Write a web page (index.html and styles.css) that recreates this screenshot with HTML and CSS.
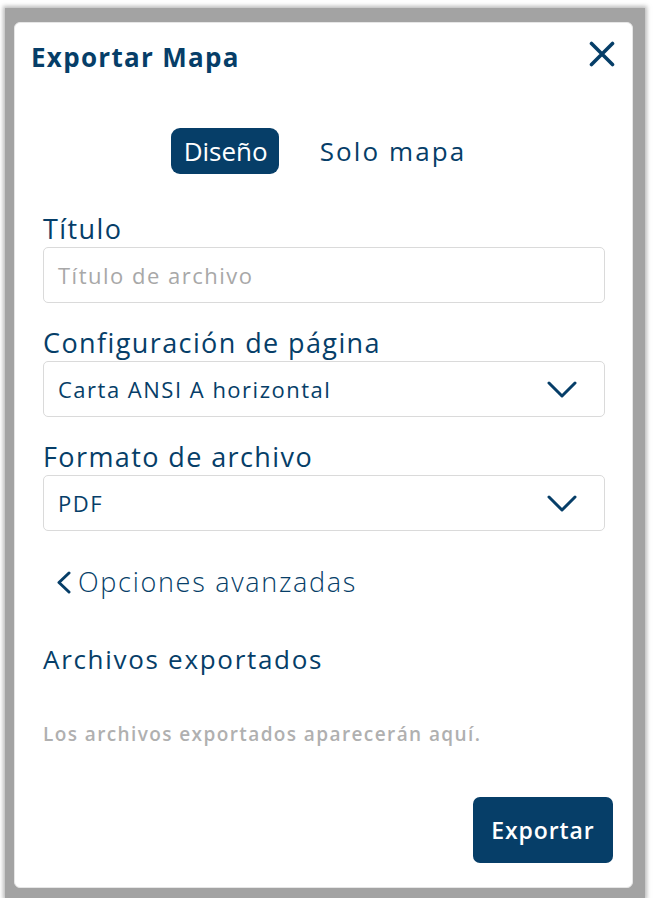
FILE: index.html
```html
<!DOCTYPE html>
<html lang="es">
<head>
<meta charset="utf-8">
<title>Exportar Mapa</title>
<link rel="stylesheet" href="styles.css">
</head>
<body>
<div class="frame">
  <div class="card">
    <header class="header">
      <h1 class="title">Exportar Mapa</h1>
      <button class="close" aria-label="Cerrar">
        <svg width="26" height="26" viewBox="0 0 26 26"><path d="M2.5 2.5 L23.5 23.5 M23.5 2.5 L2.5 23.5" stroke="#063e68" stroke-width="3.6" stroke-linecap="round"/></svg>
      </button>
    </header>
    <nav class="tabs">
      <span class="tab active">Diseño</span>
      <span class="tab">Solo mapa</span>
    </nav>
    <div class="content">
      <div class="field">
        <label class="label">Título</label>
        <div class="box"><span class="placeholder">Título de archivo</span></div>
      </div>
      <div class="field">
        <label class="label">Configuración de página</label>
        <div class="box select"><span class="value">Carta ANSI A horizontal</span>
          <svg class="chev" width="30" height="17" viewBox="0 0 30 17"><path d="M2 2 L15 15 L28 2" fill="none" stroke="#063e68" stroke-width="3" stroke-linecap="round" stroke-linejoin="round"/></svg>
        </div>
      </div>
      <div class="field">
        <label class="label">Formato de archivo</label>
        <div class="box select"><span class="value">PDF</span>
          <svg class="chev" width="30" height="17" viewBox="0 0 30 17"><path d="M2 2 L15 15 L28 2" fill="none" stroke="#063e68" stroke-width="3" stroke-linecap="round" stroke-linejoin="round"/></svg>
        </div>
      </div>
      <div class="advanced">
        <svg width="16" height="23" viewBox="0 0 16 23"><path d="M13 2 L3 11.5 L13 21" fill="none" stroke="#063e68" stroke-width="3" stroke-linecap="round" stroke-linejoin="round"/></svg>
        <span>Opciones avanzadas</span>
      </div>
      <h2 class="subtitle">Archivos exportados</h2>
      <p class="hint">Los archivos exportados aparecerán aquí.</p>
    </div>
    <footer class="footer">
      <button class="export">Exportar</button>
    </footer>
  </div>
</div>
</body>
</html>
```

FILE: styles.css
```css
* { box-sizing: border-box; }
html, body { margin: 0; padding: 0; background: #ffffff; }
body { font-family: "Open Sans", "Liberation Sans", sans-serif; color: #063e68; }

.frame {
  margin: 8px 0 0 5px;
  width: 640px;
  height: 890px;
  padding: 14px 12px 10px 9px;
  background: #a3a3a3;
  box-shadow: 0 0 4px 2px rgba(160,160,160,0.7);
}
.card {
  width: 619px;
  height: 866px;
  background: #fff;
  border: 1px solid #e6e6e6;
  border-radius: 6px;
  display: flex;
  flex-direction: column;
}
.header {
  display: flex;
  justify-content: space-between;
  align-items: flex-start;
  padding: 19px 17px 0 16px;
}
.title {
  margin: 0;
  font-size: 26px;
  line-height: 30px;
  font-weight: 700;
  letter-spacing: 1.3px;
}
.close {
  border: 0;
  background: none;
  padding: 0;
  margin-top: -1px;
  width: 26px;
  height: 26px;
  display: block;
}
.close svg { display: block; }

.tabs {
  display: flex;
  justify-content: center;
  gap: 29px;
  margin-top: 56px;
}
.tab {
  height: 46px;
  line-height: 46px;
  padding: 0 10px 0 12px;
  border-radius: 9px;
  font-size: 26px;
  letter-spacing: 2.1px;
  color: #063e68;
}
.tab.active {
  background: #063e68;
  color: #fff;
  font-weight: 500;
  letter-spacing: 0;
  padding: 0 11px 0 13px;
}

.content {
  padding: 38px 27px 0 28px;
  display: flex;
  flex-direction: column;
}
.field { display: flex; flex-direction: column; }
.field + .field { margin-top: 23px; }
.label {
  font-size: 27px;
  line-height: 34px;
  margin-bottom: 1px;
  letter-spacing: 1.4px;
}
.box {
  height: 56px;
  border: 1px solid #dadada;
  border-radius: 5px;
  display: flex;
  align-items: center;
  padding: 0 14px 0 14px;
}
.placeholder { font-size: 22px; color: #a8a8a8; letter-spacing: 1.5px; }
.value { font-size: 22px; color: #063e68; letter-spacing: 1.5px; }
.select { justify-content: space-between; padding-right: 27px; }
.chev { display: block; }

.advanced {
  display: flex;
  align-items: center;
  gap: 6px;
  margin-top: 34px;
  padding-left: 13px;
  font-size: 27px;
  line-height: 34px;
  font-weight: 300;
  letter-spacing: 1.7px;
}
.advanced svg { display: block; }

.subtitle {
  margin: 43px 0 0;
  font-size: 26px;
  line-height: 34px;
  font-weight: 500;
  letter-spacing: 1.7px;
}
.hint {
  margin: 46px 0 0;
  font-size: 19px;
  line-height: 24px;
  font-weight: 600;
  color: #b0b0b0;
  letter-spacing: 1.4px;
}

.footer {
  margin-top: auto;
  display: flex;
  justify-content: flex-end;
  padding: 0 19px 24px 0;
}
.export {
  width: 140px;
  height: 66px;
  border: 0;
  border-radius: 7px;
  background: #063e68;
  color: #fff;
  font-family: "Open Sans", "Liberation Sans", sans-serif;
  font-size: 23px;
  font-weight: 600;
  letter-spacing: 0.9px;
}
```
